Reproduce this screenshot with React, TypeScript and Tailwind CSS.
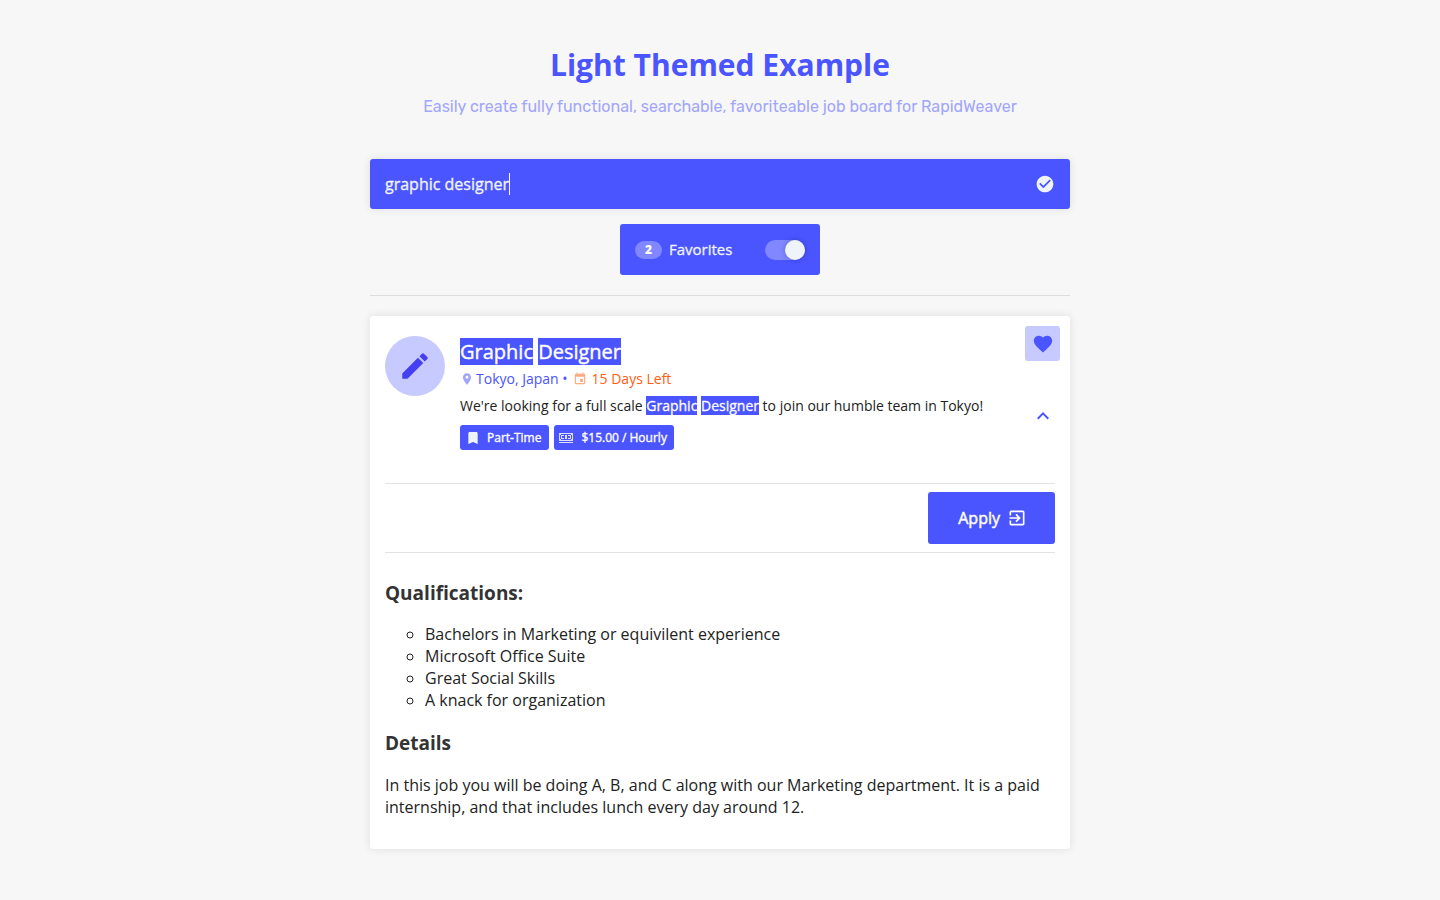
import { useState } from "react";
import {
  MdCheckCircle,
  MdEdit,
  MdFavorite,
  MdExpandLess,
  MdLocationOn,
  MdEvent,
  MdBookmark,
  MdExitToApp,
} from "react-icons/md";

function CashIcon() {
  return (
    <svg viewBox="0 0 16 16" className="size-4 text-[#dcdfff]" fill="currentColor" aria-hidden="true">
      <path
        fillRule="evenodd"
        d="M1 3h14v8H1zM2 5v4h1v1h10V9h1V5h-1V4H3v1z"
      />
      <path d="M3 5h3v1H4v2h2v1H3zM7 5h2v4H7zM10 5h3v4h-3V8h2V6h-2zM1 12h14v1H1z" />
    </svg>
  );
}

function Mark({ children }: { children: string }) {
  return <mark className="bg-[#4a54ff] text-white [-webkit-text-stroke:0.02em]">{children}</mark>;
}

const qualifications = [
  "Bachelors in Marketing or equivilent experience",
  "Microsoft Office Suite",
  "Great Social Skills",
  "A knack for organization",
];

export default function App() {
  const [query, setQuery] = useState("graphic designer");
  const [onlyFavorites, setOnlyFavorites] = useState(true);

  return (
    <div className="min-h-screen bg-[#f7f7f7] px-4 pt-11 pb-12 font-['Open_Sans',sans-serif] text-base text-[#333]">
      <main className="mx-auto max-w-[700px]">
        <header className="text-center">
          <h1 className="text-[30px] leading-[42px] font-bold text-[#4a54ff]">Light Themed Example</h1>
          <p className="mt-[9px] font-['Rubik',Roboto,sans-serif] text-base leading-6 text-[#a2a6fb]">
            Easily create fully functional, searchable, favoriteable job board for RapidWeaver
          </p>
        </header>

        <div className="mt-10 flex h-[50px] items-center rounded-[3px] bg-[#4a54ff] px-[15px] text-[#eff4fb] shadow-[0_0_10px_rgba(0,0,0,0.1)]">
          <label className="flex h-full min-w-0 flex-1 cursor-text items-center">
            <input
              type="text"
              aria-label="Search jobs"
              value={query}
              onChange={(e) => setQuery(e.target.value)}
              className="field-sizing-content h-full max-w-full min-w-0 bg-transparent caret-transparent outline-none [-webkit-text-stroke:0.02em]"
            />
            <span aria-hidden="true" className="h-[22px] w-px bg-white" />
          </label>
          <MdCheckCircle className="size-5" />
        </div>

        <label className="mx-auto mt-[15px] flex h-[51px] w-[200px] cursor-pointer items-center rounded-[3px] bg-[#4a54ff] px-[15px] text-[#eff4fb]">
          <span className="flex h-[18px] w-[27px] items-center justify-center rounded-full bg-[#8087ff] text-xs font-extrabold text-white">
            2
          </span>
          <span className="ml-[7px] flex-1 text-[15px] [-webkit-text-stroke:0.02em]">Favorites</span>
          <input
            type="checkbox"
            role="switch"
            checked={onlyFavorites}
            onChange={(e) => setOnlyFavorites(e.target.checked)}
            className="flex h-5 w-10 cursor-pointer appearance-none rounded-full bg-[#8087ff] before:size-5 before:rounded-full before:bg-[#eff4fb] before:shadow-[0_0_5px_rgba(0,0,0,0.25)] checked:justify-end"
          />
        </label>

        <hr className="my-5 border-[#ddd]" />

        <article className="relative rounded-[3px] bg-white px-[15px] pt-5 pb-[31px] shadow-[0_0_10px_rgba(0,0,0,0.1)]">
          <button
            type="button"
            aria-label="Remove from favorites"
            className="absolute top-2.5 right-2.5 flex size-[35px] items-center justify-center rounded-[3px] bg-[#c7caff] text-[#4a54ff]"
          >
            <MdFavorite className="size-[22px]" />
          </button>

          <div className="flex gap-[15px]">
            <div className="flex size-[60px] shrink-0 items-center justify-center rounded-full bg-[#c7caff] text-[#443ff0]">
              <MdEdit className="size-[34px]" />
            </div>
            <div className="min-w-0 flex-1">
              <h2 className="text-xl leading-8">
                <Mark>Graphic</Mark> <Mark>Designer</Mark>
              </h2>
              <p className="flex items-center text-sm leading-[22px] text-[#4a54ff]">
                <MdLocationOn className="mr-0.5 size-[14px] text-[#a2a6fb]" />
                Tokyo, Japan •
                <MdEvent className="mx-[5px] size-[14px] text-[#ffac82]" />
                <span className="text-[#ff5c14]">15 Days Left</span>
              </p>
              <p className="mt-1 text-sm leading-6 text-[#222]">
                We're looking for a full scale <Mark>Graphic</Mark> <Mark>Designer</Mark> to join our humble team in
                Tokyo!
              </p>
              <ul className="mt-[7px] flex gap-[5px] text-xs text-white">
                <li className="flex h-[25px] items-center gap-1.5 rounded-[3px] bg-[#4a54ff] pr-2 pl-[5px] [-webkit-text-stroke:0.03em]">
                  <MdBookmark className="size-4 text-[#eff4fb]" />
                  Part-Time
                </li>
                <li className="flex h-[25px] items-center gap-[7px] rounded-[3px] bg-[#4a54ff] pr-[7px] pl-1 [-webkit-text-stroke:0.03em]">
                  <CashIcon />
                  $15.00 / Hourly
                </li>
              </ul>
            </div>
            <button
              type="button"
              aria-label="Collapse details"
              className="mt-[68px] flex size-6 items-center justify-center self-start text-[#4a54ff]"
            >
              <MdExpandLess className="size-6" />
            </button>
          </div>

          <div className="mt-[33px] flex justify-end border-y border-[#e3e3e3] py-2">
            <button
              type="button"
              className="flex h-[52px] items-center gap-[7px] rounded-[3px] bg-[#4a54ff] pr-7 pl-[30px] text-white [-webkit-text-stroke:0.03em]"
            >
              Apply
              <MdExitToApp className="size-5" />
            </button>
          </div>

          <h3 className="mt-[27px] text-[19px] leading-[26px] font-bold">Qualifications:</h3>
          <ul className="mt-[17px] list-[circle] pl-10 leading-[22px] text-[#222]">
            {qualifications.map((item) => (
              <li key={item}>{item}</li>
            ))}
          </ul>
          <h3 className="mt-[19px] text-[19px] leading-[26px] font-bold">Details</h3>
          <p className="mt-[18px] leading-[22px] text-[#222]">
            In this job you will be doing A, B, and C along with our Marketing department. It is a paid internship, and
            that includes lunch every day around 12.
          </p>
        </article>
      </main>
    </div>
  );
}
